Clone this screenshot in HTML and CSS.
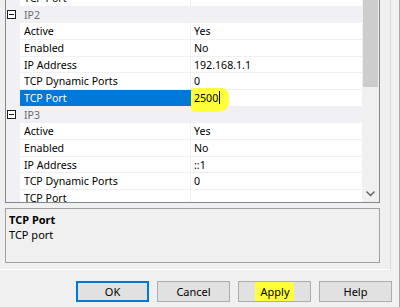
FILE: index.html
```html
<!DOCTYPE html>
<html lang="en">
<head>
  <meta charset="UTF-8" />
  <title>Protocol Properties</title>
  <link rel="stylesheet" href="styles.css">
</head>
<body>
  <div class="dialog">
    <div class="page">
      <div class="grid">
        <div class="rows">
          <div class="row">
            <span class="gutter"></span><span class="label">TCP Port</span><span class="value"></span>
          </div>
          <div class="row category">
            <span class="gutter"><span class="toggle"></span></span><span class="label">IP2</span>
          </div>
          <div class="row">
            <span class="gutter"></span><span class="label">Active</span><span class="value">Yes</span>
          </div>
          <div class="row">
            <span class="gutter"></span><span class="label">Enabled</span><span class="value">No</span>
          </div>
          <div class="row">
            <span class="gutter"></span><span class="label">IP Address</span><span class="value">192.168.1.1</span>
          </div>
          <div class="row">
            <span class="gutter"></span><span class="label">TCP Dynamic Ports</span><span class="value">0</span>
          </div>
          <div class="row selected">
            <span class="gutter"></span><span class="label">TCP Port</span>
            <span class="value editing"><span class="marker"></span><span class="edit-text">2500</span><span class="caret"></span></span>
          </div>
          <div class="row category">
            <span class="gutter"><span class="toggle"></span></span><span class="label">IP3</span>
          </div>
          <div class="row">
            <span class="gutter"></span><span class="label">Active</span><span class="value">Yes</span>
          </div>
          <div class="row">
            <span class="gutter"></span><span class="label">Enabled</span><span class="value">No</span>
          </div>
          <div class="row">
            <span class="gutter"></span><span class="label">IP Address</span><span class="value">::1</span>
          </div>
          <div class="row">
            <span class="gutter"></span><span class="label">TCP Dynamic Ports</span><span class="value">0</span>
          </div>
          <div class="row">
            <span class="gutter"></span><span class="label">TCP Port</span><span class="value"></span>
          </div>
        </div>
        <div class="scrollbar">
          <div class="thumb"></div>
          <div class="track"></div>
          <div class="arrow-down">
            <svg width="9" height="6" viewBox="0 0 9 6"><path d="M0.5 0.5 L4.5 4.5 L8.5 0.5" fill="none" stroke="#606060" stroke-width="1.4"/></svg>
          </div>
        </div>
      </div>

      <div class="desc">
        <div class="desc-title">TCP Port</div>
        <div class="desc-text">TCP port</div>
      </div>
    </div>

    <div class="buttons">
      <button class="btn default">OK</button>
      <button class="btn">Cancel</button>
      <button class="btn"><span class="marked">Apply</span></button>
      <button class="btn">Help</button>
    </div>
  </div>
</body>
</html>
```

FILE: styles.css
```css
* {
  margin: 0;
  padding: 0;
  box-sizing: border-box;
}

body {
  background: #f0f0f0;
  font-family: 'Noto Sans', 'Segoe UI', sans-serif;
  font-size: 10.6px;
  color: #000;
  overflow: hidden;
}

.dialog {
  width: 400px;
  height: 307px;
  display: flex;
  flex-direction: column;
  border-right: 1px solid #a8a8a8;
}

.page {
  height: 270px;
  padding: 0 10px 0 5px;
  margin-right: 8px;
  border-right: 1px solid #dcdcdc;
  border-bottom: 1px solid #fff;
  display: flex;
  flex-direction: column;
}

/* property grid */

.grid {
  height: 203px;
  display: flex;
  background: #fff;
  border: 1px solid #828790;
  border-top: none;
  overflow: hidden;
}

.rows {
  flex: 1;
  margin-top: -10px;
}

.row {
  display: flex;
  height: 16.67px;
  line-height: 16px;
  white-space: nowrap;
}

.gutter {
  width: 14px;
  flex-shrink: 0;
  background: #f0f0f5;
  position: relative;
}

.label {
  width: 171px;
  padding-left: 4px;
  border-right: 1px solid #f0f0f0;
  border-bottom: 1px solid #f0f0f0;
}

.value {
  flex: 1;
  padding-left: 3px;
  border-bottom: 1px solid #f0f0f0;
  position: relative;
}

.category {
  background: #f0f0f5;
}

.category .label {
  border: none;
  color: #6d6d6d;
}

.toggle {
  position: absolute;
  left: 1px;
  top: 3px;
  width: 9px;
  height: 9px;
  border: 1px solid #1e1e1e;
  background: #fff;
}

.toggle::after {
  content: '';
  position: absolute;
  left: 1px;
  right: 1px;
  top: 3px;
  height: 1px;
  background: #1e1e1e;
}

.selected .label {
  background: #0078d7;
  color: #fff;
  border-right: none;
}

.editing {
  border-left: 2px solid #1f4e3a;
  padding-left: 1px;
  display: flex;
  align-items: center;
}

.marker {
  position: absolute;
  left: -2px;
  top: -2px;
  width: 38px;
  height: 24px;
  background: #ffff3a;
  border-radius: 3px 8px 10px 4px;
}

.edit-text {
  position: relative;
}

.caret {
  position: relative;
  width: 1px;
  height: 13px;
  background: #000;
  margin-left: 1px;
}

.scrollbar {
  width: 17px;
  display: flex;
  flex-direction: column;
  background: #f0f0f0;
}

.thumb {
  height: 87px;
  margin: 0 1px 0 1px;
  background: #cdcdcd;
}

.track {
  flex: 1;
}

.arrow-down {
  height: 17px;
  display: flex;
  align-items: center;
  justify-content: center;
}

/* description pane */

.desc {
  margin-top: 5px;
  height: 55px;
  border: 1px solid #a0a0a0;
  padding: 3px 3px;
  font-size: 11px;
  line-height: 15px;
}

.desc-title {
  font-weight: bold;
}

/* dialog buttons */

.buttons {
  display: flex;
  justify-content: flex-end;
  gap: 8px;
  padding: 11px 7px 0 0;
}

.btn {
  width: 73px;
  height: 21px;
  font-family: inherit;
  font-size: 11px;
  background: #e1e1e1;
  border: 1px solid #adadad;
  color: #000;
}

.btn.default {
  border: 2px solid #0078d7;
}

.marked {
  display: inline-block;
  background: #ffff3a;
  padding: 2px 4px 2px 5px;
  margin: -2px 0;
  border-radius: 2px;
}
```
